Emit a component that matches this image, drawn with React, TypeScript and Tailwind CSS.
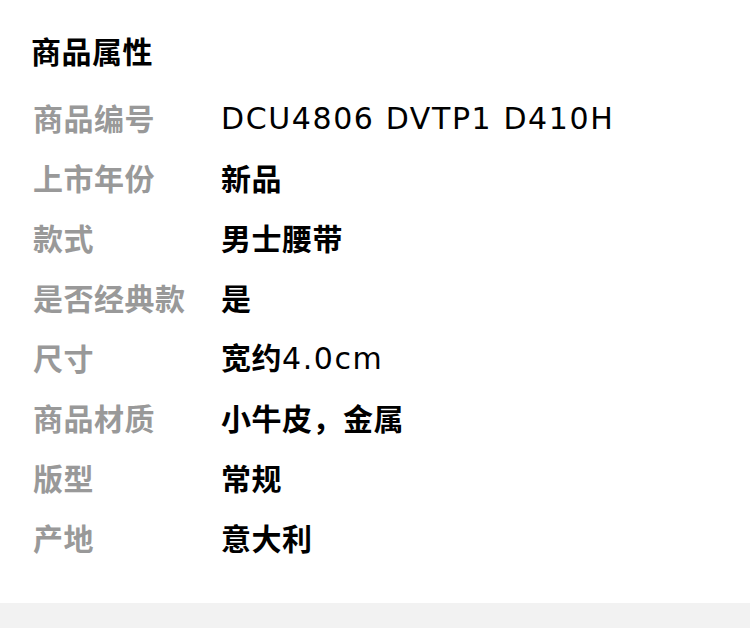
import React from "react";

const latin = "font-normal [font-family:'DejaVu_Sans',sans-serif] tracking-[1.6px]";

const rows: { label: string; value: React.ReactNode }[] = [
  { label: "商品编号", value: <span className={latin}>DCU4806 DVTP1 D410H</span> },
  { label: "上市年份", value: "新品" },
  { label: "款式", value: "男士腰带" },
  { label: "是否经典款", value: "是" },
  { label: "尺寸", value: <>宽约<span className={latin}>4.0cm</span></> },
  { label: "商品材质", value: "小牛皮，金属" },
  { label: "版型", value: "常规" },
  { label: "产地", value: "意大利" },
];

export default function App() {
  return (
    <div
      className="w-[750px] h-[628px] bg-white flex flex-col"
      style={{ fontFamily: '"Noto Sans CJK SC", sans-serif' }}
    >
      <div className="px-[31px] pt-[30px] pb-[36px]">
        <div className="h-[40px] flex items-center text-[30px] font-bold text-black tracking-[0.5px]">
          商品属性
        </div>
        <div className="mt-[17px] flex flex-col">
          {rows.map((r) => (
            <div key={r.label} className="h-[60px] flex items-center text-[30px]">
              <div className="w-[190px] pl-[2px] font-bold text-[#999999] tracking-[0.5px]">{r.label}</div>
              <div className="font-bold text-black tracking-[0.5px]">{r.value}</div>
            </div>
          ))}
        </div>
      </div>
      <div className="flex-1 bg-[#f2f2f2]" />
    </div>
  );
}
